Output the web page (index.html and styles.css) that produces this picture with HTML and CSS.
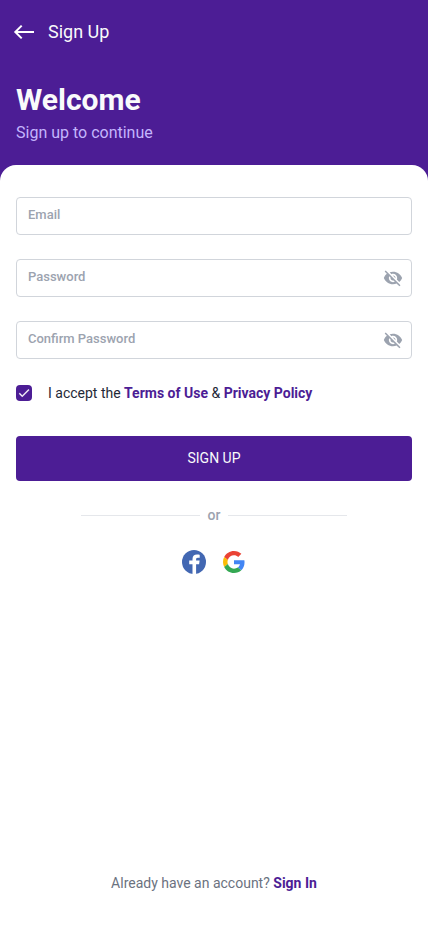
FILE: index.html
```html
<!DOCTYPE html>
<html lang="en">
<head>
<meta charset="utf-8">
<meta name="viewport" content="width=device-width, initial-scale=1">
<title>Sign Up</title>
<link rel="stylesheet" href="styles.css">
</head>
<body>
<div class="page">
  <header class="header">
    <nav class="topbar">
      <svg class="back" viewBox="0 0 28 28"><path d="M24 14H5.5M11.7 7.6L5.3 14l6.4 6.4"/></svg>
      <span>Sign Up</span>
    </nav>
    <h1>Welcome</h1>
    <p class="subtitle">Sign up to continue</p>
  </header>
  <main class="card">
    <form class="form">
      <div class="field"><label>Email</label></div>
      <div class="field"><label>Password</label>
        <svg class="eye" viewBox="0 0 24 24"><path d="M12 7c2.76 0 5 2.24 5 5 0 .65-.13 1.26-.36 1.83l2.92 2.92c1.51-1.26 2.7-2.89 3.43-4.75-1.73-4.39-6-7.5-11-7.5-1.4 0-2.74.25-3.98.7l2.16 2.16C10.74 7.13 11.35 7 12 7zM2 4.27l2.28 2.28.46.46C3.08 8.3 1.78 10.02 1 12c1.73 4.39 6 7.5 11 7.5 1.55 0 3.03-.3 4.38-.84l.42.42L19.73 22 21 20.73 3.27 3 2 4.27zM7.53 9.8l1.55 1.55c-.05.21-.08.43-.08.65 0 1.66 1.34 3 3 3 .22 0 .44-.03.65-.08l1.55 1.55c-.67.33-1.41.53-2.2.53-2.76 0-5-2.24-5-5 0-.79.2-1.53.53-2.2zm4.31-.78l3.15 3.15.02-.16c0-1.66-1.34-3-3-3l-.17.01z"/></svg>
      </div>
      <div class="field"><label>Confirm Password</label>
        <svg class="eye" viewBox="0 0 24 24"><path d="M12 7c2.76 0 5 2.24 5 5 0 .65-.13 1.26-.36 1.83l2.92 2.92c1.51-1.26 2.7-2.89 3.43-4.75-1.73-4.39-6-7.5-11-7.5-1.4 0-2.74.25-3.98.7l2.16 2.16C10.74 7.13 11.35 7 12 7zM2 4.27l2.28 2.28.46.46C3.08 8.3 1.78 10.02 1 12c1.73 4.39 6 7.5 11 7.5 1.55 0 3.03-.3 4.38-.84l.42.42L19.73 22 21 20.73 3.27 3 2 4.27zM7.53 9.8l1.55 1.55c-.05.21-.08.43-.08.65 0 1.66 1.34 3 3 3 .22 0 .44-.03.65-.08l1.55 1.55c-.67.33-1.41.53-2.2.53-2.76 0-5-2.24-5-5 0-.79.2-1.53.53-2.2zm4.31-.78l3.15 3.15.02-.16c0-1.66-1.34-3-3-3l-.17.01z"/></svg>
      </div>
    </form>
    <div class="accept">
      <span class="checkbox"><svg viewBox="0 0 24 24"><path d="M9 16.17L4.83 12l-1.42 1.41L9 19 21 7l-1.41-1.41z"/></svg></span>
      <span>I accept the <b>Terms of Use</b> &amp; <b>Privacy Policy</b></span>
    </div>
    <button class="submit" type="button">SIGN UP</button>
    <div class="divider"><i></i><span>or</span><i></i></div>
    <div class="social">
      <svg class="facebook" viewBox="0 0 24 24"><circle cx="12" cy="12" r="12" fill="#4267b2"/><path fill="#fff" d="M10.5 24v-9.8H7.2v-3.7h3.3V8.9c0-3 1.8-4.4 4.5-4.4 1.3 0 2.3.1 2.7.2v3.1h-1.8c-1.5 0-1.8.7-1.8 1.7v1h3.5l-.5 3.7h-3V24z"/></svg>
      <svg class="google" viewBox="0 0 48 48"><path fill="#ea4335" d="M24 9.5c3.54 0 6.71 1.22 9.21 3.6l6.85-6.85C35.9 2.38 30.47 0 24 0 14.62 0 6.51 5.38 2.56 13.22l7.98 6.19C12.43 13.72 17.74 9.5 24 9.5z"/><path fill="#4285f4" d="M46.98 24.55c0-1.57-.15-3.09-.38-4.55H24v9.02h12.94c-.58 2.96-2.26 5.48-4.78 7.18l7.73 6c4.51-4.18 7.09-10.36 7.09-17.65z"/><path fill="#fbbc05" d="M10.53 28.59c-.48-1.45-.76-2.99-.76-4.59s.27-3.14.76-4.59l-7.98-6.19C.92 16.46 0 20.12 0 24c0 3.88.92 7.54 2.56 10.78z"/><path fill="#34a853" d="M24 48c6.48 0 11.93-2.13 15.89-5.81l-7.73-6c-2.15 1.45-4.92 2.3-8.16 2.3-6.26 0-11.57-4.22-13.47-9.91l-7.98 6.19C6.51 42.62 14.62 48 24 48z"/></svg>
    </div>
    <footer class="footer">Already have an account? <b>Sign In</b></footer>
  </main>
</div>
</body>
</html>
```
FILE: styles.css
```css
* { box-sizing: border-box; }

body {
  margin: 0;
  background: #4c1d95;
  font-family: Roboto, "Liberation Sans", sans-serif;
  font-size: 14px;
  color: #1f2937;
}

svg { display: block; flex: none; }

.page {
  display: flex;
  flex-direction: column;
  height: 926px;
}

.header {
  height: 165px;
  padding: 15px 16px 0;
  color: #f9fafb;
}

.topbar {
  display: flex;
  align-items: center;
  gap: 10px;
  height: 33px;
  margin-left: -6px;
  font-size: 18px;
  line-height: 21px;
}

.back {
  width: 28px;
  height: 28px;
  margin-top: 1px;
  fill: none;
  stroke: #fff;
  stroke-width: 2;
}

h1 {
  margin: 34px 0 0;
  font-size: 30px;
  line-height: 36px;
  font-weight: 700;
}

.subtitle {
  margin: 3px 0 0;
  font-size: 16px;
  line-height: 24px;
  color: #c4b5fd;
}

.card {
  flex: 1;
  display: flex;
  flex-direction: column;
  padding: 32px 16px 33px;
  background: #fff;
  border-radius: 16px 16px 0 0;
}

.form { display: grid; gap: 24px; }

.field {
  display: flex;
  justify-content: space-between;
  height: 38px;
  padding: 8px 8px 0 11px;
  border: 1px solid #d1d5db;
  border-radius: 4px;
}

.field label {
  font-size: 13px;
  line-height: 18px;
  font-weight: 500;
  color: #9ca3af;
}

.eye { width: 20px; height: 20px; fill: #9ca3af; }

.accept {
  display: flex;
  align-items: center;
  gap: 16px;
  height: 20px;
  margin-top: 24px;
}

.accept b, .footer b { color: #4c1d95; font-weight: 700; }

.checkbox {
  display: grid;
  place-items: center;
  width: 16px;
  height: 16px;
  border-radius: 4px;
  background: #4c1d95;
}

.checkbox svg { width: 14px; height: 14px; fill: #fff; stroke: #fff; stroke-width: .5; }

.submit {
  height: 45px;
  margin-top: 33px;
  padding: 0 0 2px;
  border: 0;
  border-radius: 4px;
  background: #4c1d95;
  color: #f9fafb;
  font: 400 14px/20px Roboto, sans-serif;
}

.divider {
  display: flex;
  align-items: center;
  justify-content: center;
  gap: 8px;
  height: 20px;
  margin-top: 24px;
  font-weight: 500;
  color: #9ca3af;
}

.divider i { width: 119px; height: 1px; background: #e5e7eb; }

.social {
  display: flex;
  justify-content: center;
  gap: 17px;
  margin: 25px 1px 0 0;
}

.facebook { width: 24px; height: 24px; }
.google { width: 22px; height: 22px; margin-top: .5px; }

.footer {
  margin-top: auto;
  line-height: 20px;
  text-align: center;
  color: #6b7280;
}
```
